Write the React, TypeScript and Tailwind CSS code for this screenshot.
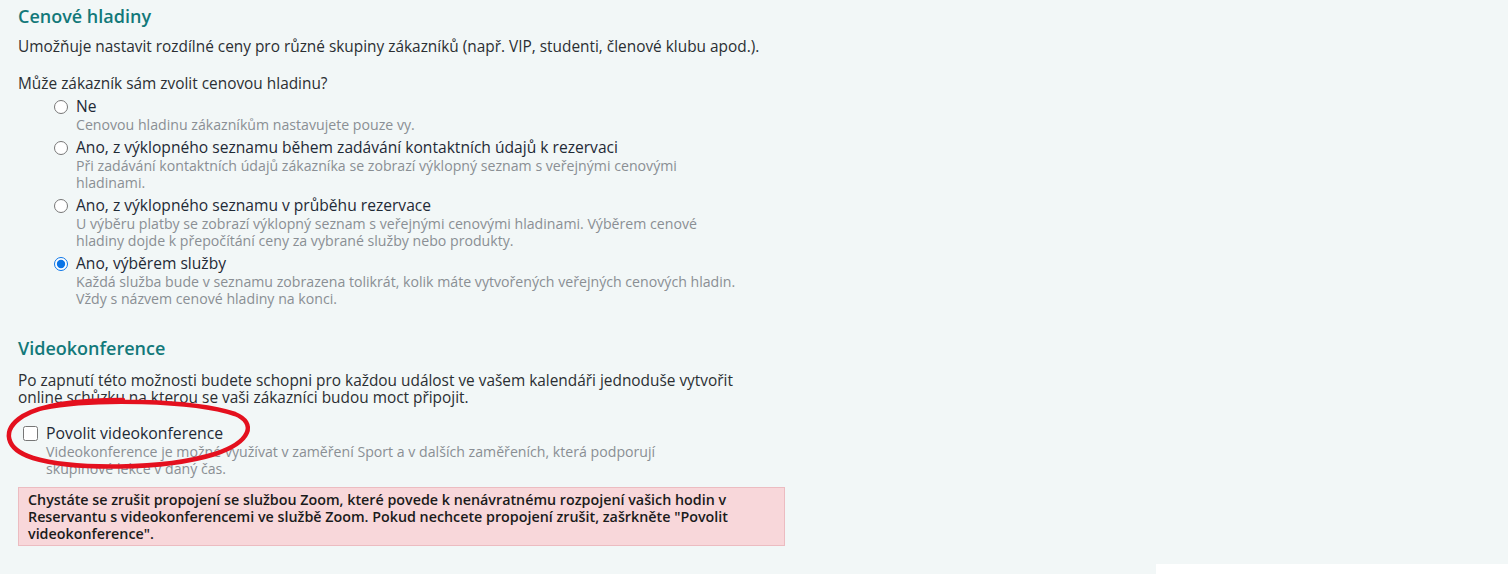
import React from "react";

type Option = {
  label: string;
  lines: string[];
  checked?: boolean;
};

const options: Option[] = [
  {
    label: "Ne",
    lines: ["Cenovou hladinu zákazníkům nastavujete pouze vy."],
  },
  {
    label: "Ano, z výklopného seznamu během zadávání kontaktních údajů k rezervaci",
    lines: [
      "Při zadávání kontaktních údajů zákazníka se zobrazí výklopný seznam s veřejnými cenovými",
      "hladinami.",
    ],
  },
  {
    label: "Ano, z výklopného seznamu v průběhu rezervace",
    lines: [
      "U výběru platby se zobrazí výklopný seznam s veřejnými cenovými hladinami. Výběrem cenové",
      "hladiny dojde k přepočítání ceny za vybrané služby nebo produkty.",
    ],
  },
  {
    label: "Ano, výběrem služby",
    lines: [
      "Každá služba bude v seznamu zobrazena tolikrát, kolik máte vytvořených veřejných cenových hladin.",
      "Vždy s názvem cenové hladiny na konci.",
    ],
    checked: true,
  },
];

function Lines({ lines }: { lines: string[] }) {
  return (
    <>
      {lines.map((line) => (
        <span key={line} className="block whitespace-nowrap">
          {line}
        </span>
      ))}
    </>
  );
}

function Highlight() {
  return (
    <svg
      className="pointer-events-none absolute left-[-15px] top-[-29px]"
      width="252"
      height="76"
      viewBox="0 0 252 76"
      fill="none"
    >
      <path
        d="M40 12 C 90 2, 190 4, 232 18 C 254 27, 248 46, 212 58 C 160 74, 70 74, 30 62 C 2 53, -2 34, 20 20 C 40 8, 80 4, 120 4"
        stroke="#e4101e"
        strokeWidth="4.5"
        strokeLinecap="round"
      />
    </svg>
  );
}

export default function App() {
  return (
    <div className="min-h-[574px] w-full bg-white font-['Open_Sans',sans-serif] text-[15.4px] leading-[17px] text-[#2b2f33]">
      <div className="h-[564px] w-[1508px] bg-[#f2f7f7] px-[18px] pt-[4px]">
        <div className="w-[767px]">
          <h2 className="text-[18px] font-semibold leading-[24px] text-[#13797a]">
            Cenové hladiny
          </h2>
          <p className="mt-[10px] whitespace-nowrap">
            Umožňuje nastavit rozdílné ceny pro různé skupiny zákazníků (např. VIP, studenti, členové klubu apod.).
          </p>
          <p className="mt-[20px]">Může zákazník sám zvolit cenovou hladinu?</p>

          <div className="mt-[6px] flex flex-col gap-[6px] pl-[36px]">
            {options.map((opt) => (
              <label key={opt.label} className="flex items-start gap-[8px]">
                <input
                  type="radio"
                  name="price-level"
                  defaultChecked={opt.checked}
                  className="m-0 mt-[2px] h-[14px] w-[14px] shrink-0 accent-[#0a74e6]"
                />
                <span className="flex flex-col">
                  <span className="whitespace-nowrap text-[15.6px] text-[#1f2a36]">{opt.label}</span>
                  <span className="mt-[1px] text-[14.15px] text-[#8a8f94]">
                    <Lines lines={opt.lines} />
                  </span>
                </span>
              </label>
            ))}
          </div>

          <h2 className="mt-[29px] text-[18px] font-semibold leading-[24px] text-[#13797a]">
            Videokonference
          </h2>
          <p className="mt-[12px]">
            <Lines
              lines={[
                "Po zapnutí této možnosti budete schopni pro každou událost ve vašem kalendáři jednoduše vytvořit",
                "online schůzku na kterou se vaši zákazníci budou moct připojit.",
              ]}
            />
          </p>

          <div className="relative mt-[19px]">
            <label className="flex items-start gap-[8px] pl-[5px]">
              <input
                type="checkbox"
                className="m-0 mt-[1px] h-[15px] w-[15px] shrink-0 accent-[#0a74e6]"
              />
              <span className="flex flex-col">
                <span className="whitespace-nowrap text-[15.8px] text-[#1f2a36]">Povolit videokonference</span>
                <span className="mt-[1px] text-[14.15px] text-[#8a8f94]">
                  <Lines
                    lines={[
                      "Videokonference je možné využívat v zaměření Sport a v dalších zaměřeních, která podporují",
                      "skupinové lekce v daný čas.",
                    ]}
                  />
                </span>
              </span>
            </label>
            <Highlight />
          </div>

          <div className="mt-[10px] border border-[#ecbcc1] bg-[#f8d7da] px-[9px] py-[3px] text-[14.3px] font-semibold text-[#1b1b1b]">
            <Lines
              lines={[
                "Chystáte se zrušit propojení se službou Zoom, které povede k nenávratnému rozpojení vašich hodin v",
                "Reservantu s videokonferencemi ve službě Zoom. Pokud nechcete propojení zrušit, zašrkněte \"Povolit",
                "videokonference\".",
              ]}
            />
          </div>
        </div>
      </div>
      <div className="h-[10px] w-[1156px] bg-[#f2f7f7]" />
    </div>
  );
}
